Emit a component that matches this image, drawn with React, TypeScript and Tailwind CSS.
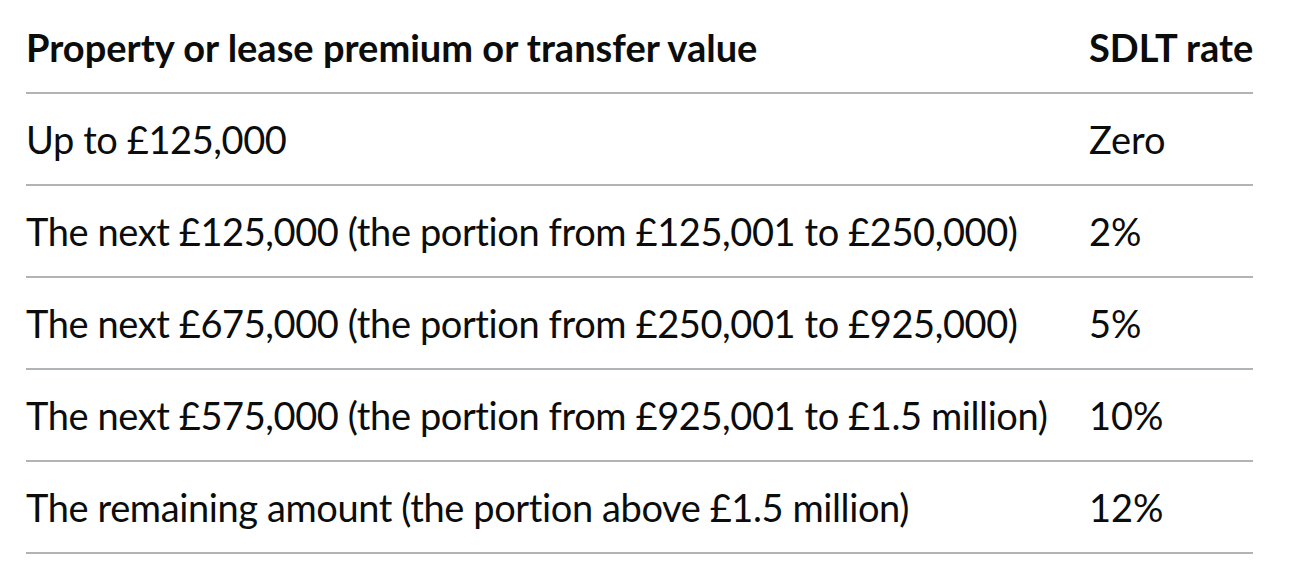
const rows = [
  ['Up to £125,000', 'Zero'],
  ['The next £125,000 (the portion from £125,001 to £250,000)', '2%'],
  ['The next £675,000 (the portion from £250,001 to £925,000)', '5%'],
  ['The next £575,000 (the portion from £925,001 to £1.5 million)', '10%'],
  ['The remaining amount (the portion above £1.5 million)', '12%'],
];

export default function App() {
  return (
    <div className="min-h-screen bg-white pl-[26px] pt-[2px] text-[#0b0c0c] font-['Lato',sans-serif]">
      <table className="w-[1227px] table-fixed border-collapse text-[38px] leading-[50px]">
        <colgroup>
          <col className="w-[1063px]" />
          <col />
        </colgroup>
        <thead>
          <tr className="border-b-2 border-[#b1b4b6]">
            <th className="py-[20px] pr-[40px] text-left font-bold whitespace-nowrap">
              Property or lease premium or transfer value
            </th>
            <th className="py-[20px] text-left font-bold whitespace-nowrap">SDLT rate</th>
          </tr>
        </thead>
        <tbody>
          {rows.map(([label, rate]) => (
            <tr key={label} className="border-b-2 border-[#b1b4b6]">
              <td className="py-[20px] pr-[40px] whitespace-nowrap tracking-[-0.4px]">{label}</td>
              <td className="py-[20px] whitespace-nowrap">{rate}</td>
            </tr>
          ))}
        </tbody>
      </table>
    </div>
  );
}
